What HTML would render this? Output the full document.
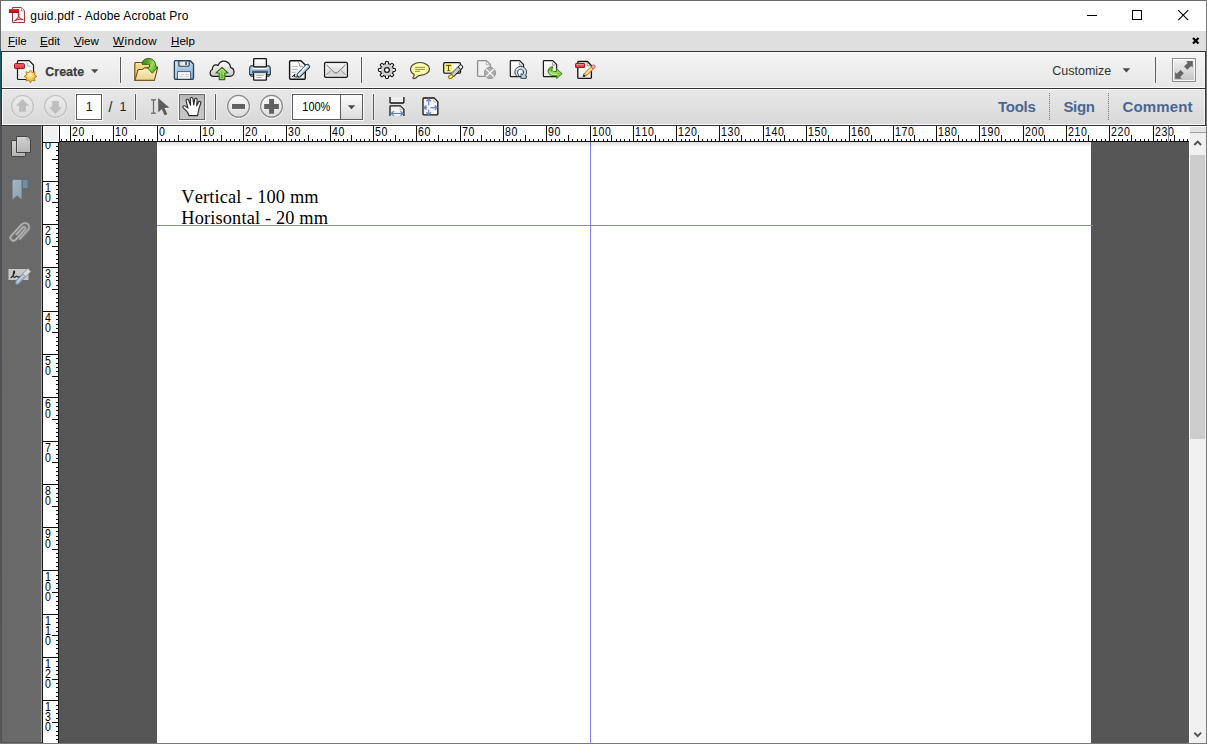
<!DOCTYPE html>
<html><head><meta charset="utf-8"><title>guid.pdf - Adobe Acrobat Pro</title>
<style>
*{box-sizing:border-box;margin:0;padding:0}
html,body{width:1207px;height:744px;overflow:hidden;background:#fff}
body{font-family:"Liberation Sans",sans-serif;position:relative;color:#000}
.abs{position:absolute}
#win{position:absolute;left:0;top:0;width:1207px;height:744px;background:#fff;overflow:hidden}
#bl{left:0;top:0;width:1px;height:744px;background:#6b6b6b}
#bl2{left:0;top:49px;width:1px;height:695px;background:linear-gradient(#1f5868 0,#1f5868 45px,#4a4f55 60px,#555a5e 100%)}
#bt{left:0;top:0;width:1207px;height:1px;background:#6b6b6b}
#br{left:1206px;top:0;width:1px;height:744px;background:#7a7a7a}
#bb{left:0;top:743px;width:1207px;height:1px;background:#7a7a7a}
#title{left:30.3px;top:9px;font-size:12px;line-height:15px;white-space:nowrap;color:#000;letter-spacing:0.17px}
#menubar{left:1px;top:31px;width:1205px;height:20px;background:#dfdfdf}
.mi{position:absolute;top:33px;font-size:11.6px;line-height:15px;color:#000;white-space:nowrap}
.mi u{text-decoration:underline;text-underline-offset:1px}
.tb{position:absolute;left:1px;width:1205px;border:1px solid #333;box-shadow:inset 0 0 0 1px #fbfbfb}
#tb1{top:51px;height:38px;background:linear-gradient(#f5f5f5,#e6e6e6)}
#tb2{top:88px;height:38px;background:linear-gradient(#e8e8e8,#d8d8d8)}
.sep{position:absolute;width:1px;background:#585858;box-shadow:0 0 0 1px rgba(255,255,255,0.45)}
#nav{left:1px;top:126px;width:41px;height:617px;background:#696969;border-left:1px solid #505050}
#navr{left:41px;top:126px;width:1px;height:617px;background:#a8a8a8}
#content{left:59px;top:142px;width:1130px;height:601px;background:#565656}
#page{left:157px;top:138px;width:934px;height:700px;background:#fff}
#corner{left:42px;top:126px;width:18px;height:17px;background:#f0f0f0;border-left:1px solid #111;border-right:1px solid #111;border-bottom:1px solid #111;box-shadow:inset 0 0 0 1px #fff}
#hr{left:60px;top:126px;width:1129px;height:15px;background:#fff}
#hrb{left:59px;top:141px;width:1130px;height:1px;background:#111}
#hrt{left:1px;top:125px;width:1205px;height:1px;background:#333}
#vr{left:42px;top:143px;width:17px;height:600px;background:#fff;border-left:1px solid #111;border-right:1px solid #111}
.rul{left:0;top:0;width:1207px;height:744px;font-family:"Liberation Sans",sans-serif;font-size:12px;fill:#000}
#sb{left:1189px;top:126px;width:17px;height:617px;background:#fff}
#sbt{left:1190px;top:133px;width:16px;height:610px;background:#f0f0f0}
#sbs{left:1190px;top:127px;width:16px;height:6px;background:#e3e3e3;border-bottom:1px solid #a0a0a0}
#thumb{left:1190px;top:155px;width:15px;height:284px;background:#cdcdcd}
.guide{position:absolute;background:#8080ff}
#doc{position:absolute;font-family:"Liberation Serif",serif;font-size:18.33px;color:#000;font-kerning:none;letter-spacing:0.15px;white-space:nowrap}
.tab{position:absolute;top:98px;font-size:15px;font-weight:bold;color:#4a6791;line-height:18px;white-space:nowrap}
.dot{position:absolute;top:93px;width:1px;height:27px;background-image:repeating-linear-gradient(#777 0 1px,transparent 1px 2px)}
</style></head><body>
<div id="win">
<!-- title bar -->
<div class="abs" id="title">guid.pdf - Adobe Acrobat Pro</div>
<!-- menubar -->
<div class="abs" id="menubar"></div>
<div class="mi" style="left:8px"><u>F</u>ile</div>
<div class="mi" style="left:40px"><u>E</u>dit</div>
<div class="mi" style="left:74px"><u>V</u>iew</div>
<div class="mi" style="left:113px;letter-spacing:0.5px"><u>W</u>indow</div>
<div class="mi" style="left:171px"><u>H</u>elp</div>
<!-- toolbars -->
<div class="tb" id="tb1"></div>
<div class="tb" id="tb2"></div>
<div class="abs" id="hrt"></div>
<div class="sep" style="left:120px;top:57px;height:26px"></div>
<div class="sep" style="left:361px;top:57px;height:26px"></div>
<div class="sep" style="left:1155px;top:57px;height:26px"></div>
<div class="sep" style="left:135px;top:94px;height:26px"></div>
<div class="sep" style="left:215px;top:94px;height:26px"></div>
<div class="sep" style="left:373px;top:94px;height:26px"></div>
<div class="tab" id="t1" style="left:998px;letter-spacing:-0.25px">Tools</div>
<div class="tab" id="t2" style="left:1063.4px;letter-spacing:-0.3px">Sign</div>
<div class="tab" id="t3" style="left:1122.5px;letter-spacing:0.15px">Comment</div>
<div class="dot" style="left:1049px"></div>
<div class="dot" style="left:1108px"></div>
<!-- nav pane -->
<div class="abs" id="nav"></div><div class="abs" id="navr"></div>
<div class="abs" style="left:1px;top:742px;width:41px;height:1px;background:#555"></div>
<!-- content -->
<div class="abs" id="content"></div>
<div class="abs" id="page"></div>
<div id="doc" style="left:181.3px;top:186.5px;line-height:21.4px">Vertical - 100 mm<br>Horisontal - 20 mm</div>
<div class="guide" style="left:590px;top:142px;width:1px;height:601px"></div>
<div class="guide" style="left:157px;top:225px;width:936px;height:1px"></div>
<div class="abs" style="left:157px;top:142px;width:934px;height:5px;background:linear-gradient(rgba(0,0,0,0.13),rgba(0,0,0,0))"></div>
<!-- rulers -->
<div class="abs" id="vr"></div>
<svg class="abs rul" width="1207" height="744" shape-rendering="crispEdges"><g fill="#111"><rect x="56" y="146" width="2" height="1"/><rect x="56" y="150" width="2" height="1"/><rect x="56" y="155" width="2" height="1"/><rect x="52" y="159" width="6" height="1"/><rect x="56" y="163" width="2" height="1"/><rect x="56" y="168" width="2" height="1"/><rect x="56" y="172" width="2" height="1"/><rect x="56" y="176" width="2" height="1"/><rect x="43" y="181" width="15" height="1"/><rect x="56" y="185" width="2" height="1"/><rect x="56" y="189" width="2" height="1"/><rect x="56" y="194" width="2" height="1"/><rect x="56" y="198" width="2" height="1"/><rect x="52" y="202" width="6" height="1"/><rect x="56" y="207" width="2" height="1"/><rect x="56" y="211" width="2" height="1"/><rect x="56" y="215" width="2" height="1"/><rect x="56" y="220" width="2" height="1"/><rect x="43" y="224" width="15" height="1"/><rect x="56" y="228" width="2" height="1"/><rect x="56" y="233" width="2" height="1"/><rect x="56" y="237" width="2" height="1"/><rect x="56" y="241" width="2" height="1"/><rect x="52" y="246" width="6" height="1"/><rect x="56" y="250" width="2" height="1"/><rect x="56" y="254" width="2" height="1"/><rect x="56" y="259" width="2" height="1"/><rect x="56" y="263" width="2" height="1"/><rect x="43" y="267" width="15" height="1"/><rect x="56" y="272" width="2" height="1"/><rect x="56" y="276" width="2" height="1"/><rect x="56" y="280" width="2" height="1"/><rect x="56" y="285" width="2" height="1"/><rect x="52" y="289" width="6" height="1"/><rect x="56" y="293" width="2" height="1"/><rect x="56" y="298" width="2" height="1"/><rect x="56" y="302" width="2" height="1"/><rect x="56" y="306" width="2" height="1"/><rect x="43" y="311" width="15" height="1"/><rect x="56" y="315" width="2" height="1"/><rect x="56" y="319" width="2" height="1"/><rect x="56" y="324" width="2" height="1"/><rect x="56" y="328" width="2" height="1"/><rect x="52" y="332" width="6" height="1"/><rect x="56" y="337" width="2" height="1"/><rect x="56" y="341" width="2" height="1"/><rect x="56" y="345" width="2" height="1"/><rect x="56" y="350" width="2" height="1"/><rect x="43" y="354" width="15" height="1"/><rect x="56" y="358" width="2" height="1"/><rect x="56" y="363" width="2" height="1"/><rect x="56" y="367" width="2" height="1"/><rect x="56" y="371" width="2" height="1"/><rect x="52" y="376" width="6" height="1"/><rect x="56" y="380" width="2" height="1"/><rect x="56" y="384" width="2" height="1"/><rect x="56" y="389" width="2" height="1"/><rect x="56" y="393" width="2" height="1"/><rect x="43" y="397" width="15" height="1"/><rect x="56" y="402" width="2" height="1"/><rect x="56" y="406" width="2" height="1"/><rect x="56" y="410" width="2" height="1"/><rect x="56" y="415" width="2" height="1"/><rect x="52" y="419" width="6" height="1"/><rect x="56" y="423" width="2" height="1"/><rect x="56" y="428" width="2" height="1"/><rect x="56" y="432" width="2" height="1"/><rect x="56" y="436" width="2" height="1"/><rect x="43" y="441" width="15" height="1"/><rect x="56" y="445" width="2" height="1"/><rect x="56" y="449" width="2" height="1"/><rect x="56" y="454" width="2" height="1"/><rect x="56" y="458" width="2" height="1"/><rect x="52" y="462" width="6" height="1"/><rect x="56" y="467" width="2" height="1"/><rect x="56" y="471" width="2" height="1"/><rect x="56" y="475" width="2" height="1"/><rect x="56" y="480" width="2" height="1"/><rect x="43" y="484" width="15" height="1"/><rect x="56" y="488" width="2" height="1"/><rect x="56" y="493" width="2" height="1"/><rect x="56" y="497" width="2" height="1"/><rect x="56" y="501" width="2" height="1"/><rect x="52" y="506" width="6" height="1"/><rect x="56" y="510" width="2" height="1"/><rect x="56" y="514" width="2" height="1"/><rect x="56" y="519" width="2" height="1"/><rect x="56" y="523" width="2" height="1"/><rect x="43" y="527" width="15" height="1"/><rect x="56" y="531" width="2" height="1"/><rect x="56" y="536" width="2" height="1"/><rect x="56" y="540" width="2" height="1"/><rect x="56" y="544" width="2" height="1"/><rect x="52" y="549" width="6" height="1"/><rect x="56" y="553" width="2" height="1"/><rect x="56" y="557" width="2" height="1"/><rect x="56" y="562" width="2" height="1"/><rect x="56" y="566" width="2" height="1"/><rect x="43" y="570" width="15" height="1"/><rect x="56" y="575" width="2" height="1"/><rect x="56" y="579" width="2" height="1"/><rect x="56" y="583" width="2" height="1"/><rect x="56" y="588" width="2" height="1"/><rect x="52" y="592" width="6" height="1"/><rect x="56" y="596" width="2" height="1"/><rect x="56" y="601" width="2" height="1"/><rect x="56" y="605" width="2" height="1"/><rect x="56" y="609" width="2" height="1"/><rect x="43" y="614" width="15" height="1"/><rect x="56" y="618" width="2" height="1"/><rect x="56" y="622" width="2" height="1"/><rect x="56" y="627" width="2" height="1"/><rect x="56" y="631" width="2" height="1"/><rect x="52" y="635" width="6" height="1"/><rect x="56" y="640" width="2" height="1"/><rect x="56" y="644" width="2" height="1"/><rect x="56" y="648" width="2" height="1"/><rect x="56" y="653" width="2" height="1"/><rect x="43" y="657" width="15" height="1"/><rect x="56" y="661" width="2" height="1"/><rect x="56" y="666" width="2" height="1"/><rect x="56" y="670" width="2" height="1"/><rect x="56" y="674" width="2" height="1"/><rect x="52" y="679" width="6" height="1"/><rect x="56" y="683" width="2" height="1"/><rect x="56" y="687" width="2" height="1"/><rect x="56" y="692" width="2" height="1"/><rect x="56" y="696" width="2" height="1"/><rect x="43" y="700" width="15" height="1"/><rect x="56" y="705" width="2" height="1"/><rect x="56" y="709" width="2" height="1"/><rect x="56" y="713" width="2" height="1"/><rect x="56" y="718" width="2" height="1"/><rect x="52" y="722" width="6" height="1"/><rect x="56" y="726" width="2" height="1"/><rect x="56" y="731" width="2" height="1"/><rect x="56" y="735" width="2" height="1"/><rect x="56" y="739" width="2" height="1"/></g><g shape-rendering="auto"><text transform="translate(45.1 149.0) scale(0.88 1)">0</text><text transform="translate(45.1 191.6) scale(0.88 1)">1</text><text transform="translate(45.1 201.9) scale(0.88 1)">0</text><text transform="translate(45.1 234.6) scale(0.88 1)">2</text><text transform="translate(45.1 244.9) scale(0.88 1)">0</text><text transform="translate(45.1 277.6) scale(0.88 1)">3</text><text transform="translate(45.1 287.9) scale(0.88 1)">0</text><text transform="translate(45.1 321.6) scale(0.88 1)">4</text><text transform="translate(45.1 331.9) scale(0.88 1)">0</text><text transform="translate(45.1 364.6) scale(0.88 1)">5</text><text transform="translate(45.1 374.9) scale(0.88 1)">0</text><text transform="translate(45.1 407.6) scale(0.88 1)">6</text><text transform="translate(45.1 417.9) scale(0.88 1)">0</text><text transform="translate(45.1 451.6) scale(0.88 1)">7</text><text transform="translate(45.1 461.9) scale(0.88 1)">0</text><text transform="translate(45.1 494.6) scale(0.88 1)">8</text><text transform="translate(45.1 504.9) scale(0.88 1)">0</text><text transform="translate(45.1 537.6) scale(0.88 1)">9</text><text transform="translate(45.1 547.9) scale(0.88 1)">0</text><text transform="translate(45.1 580.6) scale(0.88 1)">1</text><text transform="translate(45.1 590.9) scale(0.88 1)">0</text><text transform="translate(45.1 601.2) scale(0.88 1)">0</text><text transform="translate(45.1 624.6) scale(0.88 1)">1</text><text transform="translate(45.1 634.9) scale(0.88 1)">1</text><text transform="translate(45.1 645.2) scale(0.88 1)">0</text><text transform="translate(45.1 667.6) scale(0.88 1)">1</text><text transform="translate(45.1 677.9) scale(0.88 1)">2</text><text transform="translate(45.1 688.2) scale(0.88 1)">0</text><text transform="translate(45.1 710.6) scale(0.88 1)">1</text><text transform="translate(45.1 720.9) scale(0.88 1)">3</text><text transform="translate(45.1 731.2) scale(0.88 1)">0</text></g></svg>
<div class="abs" id="corner"></div>
<div class="abs" id="hr"></div>
<div class="abs" id="hrb"></div>
<svg class="abs rul" width="1207" height="744" shape-rendering="crispEdges"><g fill="#111"><rect x="61" y="139" width="1" height="2"/><rect x="66" y="139" width="1" height="2"/><rect x="70" y="126" width="1" height="15"/><rect x="74" y="139" width="1" height="2"/><rect x="79" y="139" width="1" height="2"/><rect x="83" y="139" width="1" height="2"/><rect x="87" y="139" width="1" height="2"/><rect x="92" y="135" width="1" height="6"/><rect x="96" y="139" width="1" height="2"/><rect x="100" y="139" width="1" height="2"/><rect x="105" y="139" width="1" height="2"/><rect x="109" y="139" width="1" height="2"/><rect x="113" y="126" width="1" height="15"/><rect x="118" y="139" width="1" height="2"/><rect x="122" y="139" width="1" height="2"/><rect x="126" y="139" width="1" height="2"/><rect x="131" y="139" width="1" height="2"/><rect x="135" y="135" width="1" height="6"/><rect x="139" y="139" width="1" height="2"/><rect x="144" y="139" width="1" height="2"/><rect x="148" y="139" width="1" height="2"/><rect x="152" y="139" width="1" height="2"/><rect x="157" y="126" width="1" height="15"/><rect x="161" y="139" width="1" height="2"/><rect x="165" y="139" width="1" height="2"/><rect x="169" y="139" width="1" height="2"/><rect x="174" y="139" width="1" height="2"/><rect x="178" y="135" width="1" height="6"/><rect x="182" y="139" width="1" height="2"/><rect x="187" y="139" width="1" height="2"/><rect x="191" y="139" width="1" height="2"/><rect x="195" y="139" width="1" height="2"/><rect x="200" y="126" width="1" height="15"/><rect x="204" y="139" width="1" height="2"/><rect x="208" y="139" width="1" height="2"/><rect x="213" y="139" width="1" height="2"/><rect x="217" y="139" width="1" height="2"/><rect x="221" y="135" width="1" height="6"/><rect x="226" y="139" width="1" height="2"/><rect x="230" y="139" width="1" height="2"/><rect x="234" y="139" width="1" height="2"/><rect x="239" y="139" width="1" height="2"/><rect x="243" y="126" width="1" height="15"/><rect x="247" y="139" width="1" height="2"/><rect x="252" y="139" width="1" height="2"/><rect x="256" y="139" width="1" height="2"/><rect x="260" y="139" width="1" height="2"/><rect x="265" y="135" width="1" height="6"/><rect x="269" y="139" width="1" height="2"/><rect x="273" y="139" width="1" height="2"/><rect x="278" y="139" width="1" height="2"/><rect x="282" y="139" width="1" height="2"/><rect x="286" y="126" width="1" height="15"/><rect x="291" y="139" width="1" height="2"/><rect x="295" y="139" width="1" height="2"/><rect x="299" y="139" width="1" height="2"/><rect x="304" y="139" width="1" height="2"/><rect x="308" y="135" width="1" height="6"/><rect x="312" y="139" width="1" height="2"/><rect x="317" y="139" width="1" height="2"/><rect x="321" y="139" width="1" height="2"/><rect x="325" y="139" width="1" height="2"/><rect x="330" y="126" width="1" height="15"/><rect x="334" y="139" width="1" height="2"/><rect x="338" y="139" width="1" height="2"/><rect x="343" y="139" width="1" height="2"/><rect x="347" y="139" width="1" height="2"/><rect x="351" y="135" width="1" height="6"/><rect x="356" y="139" width="1" height="2"/><rect x="360" y="139" width="1" height="2"/><rect x="364" y="139" width="1" height="2"/><rect x="369" y="139" width="1" height="2"/><rect x="373" y="126" width="1" height="15"/><rect x="377" y="139" width="1" height="2"/><rect x="382" y="139" width="1" height="2"/><rect x="386" y="139" width="1" height="2"/><rect x="390" y="139" width="1" height="2"/><rect x="395" y="135" width="1" height="6"/><rect x="399" y="139" width="1" height="2"/><rect x="403" y="139" width="1" height="2"/><rect x="408" y="139" width="1" height="2"/><rect x="412" y="139" width="1" height="2"/><rect x="416" y="126" width="1" height="15"/><rect x="421" y="139" width="1" height="2"/><rect x="425" y="139" width="1" height="2"/><rect x="429" y="139" width="1" height="2"/><rect x="434" y="139" width="1" height="2"/><rect x="438" y="135" width="1" height="6"/><rect x="442" y="139" width="1" height="2"/><rect x="447" y="139" width="1" height="2"/><rect x="451" y="139" width="1" height="2"/><rect x="455" y="139" width="1" height="2"/><rect x="460" y="126" width="1" height="15"/><rect x="464" y="139" width="1" height="2"/><rect x="468" y="139" width="1" height="2"/><rect x="473" y="139" width="1" height="2"/><rect x="477" y="139" width="1" height="2"/><rect x="481" y="135" width="1" height="6"/><rect x="486" y="139" width="1" height="2"/><rect x="490" y="139" width="1" height="2"/><rect x="494" y="139" width="1" height="2"/><rect x="499" y="139" width="1" height="2"/><rect x="503" y="126" width="1" height="15"/><rect x="507" y="139" width="1" height="2"/><rect x="512" y="139" width="1" height="2"/><rect x="516" y="139" width="1" height="2"/><rect x="520" y="139" width="1" height="2"/><rect x="525" y="135" width="1" height="6"/><rect x="529" y="139" width="1" height="2"/><rect x="533" y="139" width="1" height="2"/><rect x="538" y="139" width="1" height="2"/><rect x="542" y="139" width="1" height="2"/><rect x="546" y="126" width="1" height="15"/><rect x="551" y="139" width="1" height="2"/><rect x="555" y="139" width="1" height="2"/><rect x="559" y="139" width="1" height="2"/><rect x="564" y="139" width="1" height="2"/><rect x="568" y="135" width="1" height="6"/><rect x="572" y="139" width="1" height="2"/><rect x="577" y="139" width="1" height="2"/><rect x="581" y="139" width="1" height="2"/><rect x="585" y="139" width="1" height="2"/><rect x="590" y="126" width="1" height="15"/><rect x="594" y="139" width="1" height="2"/><rect x="598" y="139" width="1" height="2"/><rect x="603" y="139" width="1" height="2"/><rect x="607" y="139" width="1" height="2"/><rect x="611" y="135" width="1" height="6"/><rect x="616" y="139" width="1" height="2"/><rect x="620" y="139" width="1" height="2"/><rect x="624" y="139" width="1" height="2"/><rect x="629" y="139" width="1" height="2"/><rect x="633" y="126" width="1" height="15"/><rect x="637" y="139" width="1" height="2"/><rect x="642" y="139" width="1" height="2"/><rect x="646" y="139" width="1" height="2"/><rect x="650" y="139" width="1" height="2"/><rect x="655" y="135" width="1" height="6"/><rect x="659" y="139" width="1" height="2"/><rect x="663" y="139" width="1" height="2"/><rect x="668" y="139" width="1" height="2"/><rect x="672" y="139" width="1" height="2"/><rect x="676" y="126" width="1" height="15"/><rect x="681" y="139" width="1" height="2"/><rect x="685" y="139" width="1" height="2"/><rect x="689" y="139" width="1" height="2"/><rect x="694" y="139" width="1" height="2"/><rect x="698" y="135" width="1" height="6"/><rect x="702" y="139" width="1" height="2"/><rect x="707" y="139" width="1" height="2"/><rect x="711" y="139" width="1" height="2"/><rect x="715" y="139" width="1" height="2"/><rect x="719" y="126" width="1" height="15"/><rect x="724" y="139" width="1" height="2"/><rect x="728" y="139" width="1" height="2"/><rect x="732" y="139" width="1" height="2"/><rect x="737" y="139" width="1" height="2"/><rect x="741" y="135" width="1" height="6"/><rect x="745" y="139" width="1" height="2"/><rect x="750" y="139" width="1" height="2"/><rect x="754" y="139" width="1" height="2"/><rect x="758" y="139" width="1" height="2"/><rect x="763" y="126" width="1" height="15"/><rect x="767" y="139" width="1" height="2"/><rect x="771" y="139" width="1" height="2"/><rect x="776" y="139" width="1" height="2"/><rect x="780" y="139" width="1" height="2"/><rect x="784" y="135" width="1" height="6"/><rect x="789" y="139" width="1" height="2"/><rect x="793" y="139" width="1" height="2"/><rect x="797" y="139" width="1" height="2"/><rect x="802" y="139" width="1" height="2"/><rect x="806" y="126" width="1" height="15"/><rect x="810" y="139" width="1" height="2"/><rect x="815" y="139" width="1" height="2"/><rect x="819" y="139" width="1" height="2"/><rect x="823" y="139" width="1" height="2"/><rect x="828" y="135" width="1" height="6"/><rect x="832" y="139" width="1" height="2"/><rect x="836" y="139" width="1" height="2"/><rect x="841" y="139" width="1" height="2"/><rect x="845" y="139" width="1" height="2"/><rect x="849" y="126" width="1" height="15"/><rect x="854" y="139" width="1" height="2"/><rect x="858" y="139" width="1" height="2"/><rect x="862" y="139" width="1" height="2"/><rect x="867" y="139" width="1" height="2"/><rect x="871" y="135" width="1" height="6"/><rect x="875" y="139" width="1" height="2"/><rect x="880" y="139" width="1" height="2"/><rect x="884" y="139" width="1" height="2"/><rect x="888" y="139" width="1" height="2"/><rect x="893" y="126" width="1" height="15"/><rect x="897" y="139" width="1" height="2"/><rect x="901" y="139" width="1" height="2"/><rect x="906" y="139" width="1" height="2"/><rect x="910" y="139" width="1" height="2"/><rect x="914" y="135" width="1" height="6"/><rect x="919" y="139" width="1" height="2"/><rect x="923" y="139" width="1" height="2"/><rect x="927" y="139" width="1" height="2"/><rect x="932" y="139" width="1" height="2"/><rect x="936" y="126" width="1" height="15"/><rect x="940" y="139" width="1" height="2"/><rect x="945" y="139" width="1" height="2"/><rect x="949" y="139" width="1" height="2"/><rect x="953" y="139" width="1" height="2"/><rect x="958" y="135" width="1" height="6"/><rect x="962" y="139" width="1" height="2"/><rect x="966" y="139" width="1" height="2"/><rect x="971" y="139" width="1" height="2"/><rect x="975" y="139" width="1" height="2"/><rect x="979" y="126" width="1" height="15"/><rect x="984" y="139" width="1" height="2"/><rect x="988" y="139" width="1" height="2"/><rect x="992" y="139" width="1" height="2"/><rect x="997" y="139" width="1" height="2"/><rect x="1001" y="135" width="1" height="6"/><rect x="1005" y="139" width="1" height="2"/><rect x="1010" y="139" width="1" height="2"/><rect x="1014" y="139" width="1" height="2"/><rect x="1018" y="139" width="1" height="2"/><rect x="1023" y="126" width="1" height="15"/><rect x="1027" y="139" width="1" height="2"/><rect x="1031" y="139" width="1" height="2"/><rect x="1036" y="139" width="1" height="2"/><rect x="1040" y="139" width="1" height="2"/><rect x="1044" y="135" width="1" height="6"/><rect x="1049" y="139" width="1" height="2"/><rect x="1053" y="139" width="1" height="2"/><rect x="1057" y="139" width="1" height="2"/><rect x="1062" y="139" width="1" height="2"/><rect x="1066" y="126" width="1" height="15"/><rect x="1070" y="139" width="1" height="2"/><rect x="1075" y="139" width="1" height="2"/><rect x="1079" y="139" width="1" height="2"/><rect x="1083" y="139" width="1" height="2"/><rect x="1088" y="135" width="1" height="6"/><rect x="1092" y="139" width="1" height="2"/><rect x="1096" y="139" width="1" height="2"/><rect x="1101" y="139" width="1" height="2"/><rect x="1105" y="139" width="1" height="2"/><rect x="1109" y="126" width="1" height="15"/><rect x="1114" y="139" width="1" height="2"/><rect x="1118" y="139" width="1" height="2"/><rect x="1122" y="139" width="1" height="2"/><rect x="1127" y="139" width="1" height="2"/><rect x="1131" y="135" width="1" height="6"/><rect x="1135" y="139" width="1" height="2"/><rect x="1140" y="139" width="1" height="2"/><rect x="1144" y="139" width="1" height="2"/><rect x="1148" y="139" width="1" height="2"/><rect x="1153" y="126" width="1" height="15"/><rect x="1157" y="139" width="1" height="2"/><rect x="1161" y="139" width="1" height="2"/><rect x="1166" y="139" width="1" height="2"/><rect x="1170" y="139" width="1" height="2"/><rect x="1174" y="135" width="1" height="6"/><rect x="1179" y="139" width="1" height="2"/><rect x="1183" y="139" width="1" height="2"/><rect x="1187" y="139" width="1" height="2"/></g><g shape-rendering="auto"><text transform="translate(72 135.9) scale(0.88 1)" x="0.00 7.35">20</text><text transform="translate(115 135.9) scale(0.88 1)" x="0.00 7.35">10</text><text transform="translate(159 135.9) scale(0.88 1)" x="0.00">0</text><text transform="translate(202 135.9) scale(0.88 1)" x="0.00 7.35">10</text><text transform="translate(245 135.9) scale(0.88 1)" x="0.00 7.35">20</text><text transform="translate(288 135.9) scale(0.88 1)" x="0.00 7.35">30</text><text transform="translate(332 135.9) scale(0.88 1)" x="0.00 7.35">40</text><text transform="translate(375 135.9) scale(0.88 1)" x="0.00 7.35">50</text><text transform="translate(418 135.9) scale(0.88 1)" x="0.00 7.35">60</text><text transform="translate(462 135.9) scale(0.88 1)" x="0.00 7.35">70</text><text transform="translate(505 135.9) scale(0.88 1)" x="0.00 7.35">80</text><text transform="translate(548 135.9) scale(0.88 1)" x="0.00 7.35">90</text><text transform="translate(592 135.9) scale(0.88 1)" x="0.00 7.35 14.70">100</text><text transform="translate(635 135.9) scale(0.88 1)" x="0.00 7.35 14.70">110</text><text transform="translate(678 135.9) scale(0.88 1)" x="0.00 7.35 14.70">120</text><text transform="translate(721 135.9) scale(0.88 1)" x="0.00 7.35 14.70">130</text><text transform="translate(765 135.9) scale(0.88 1)" x="0.00 7.35 14.70">140</text><text transform="translate(808 135.9) scale(0.88 1)" x="0.00 7.35 14.70">150</text><text transform="translate(851 135.9) scale(0.88 1)" x="0.00 7.35 14.70">160</text><text transform="translate(895 135.9) scale(0.88 1)" x="0.00 7.35 14.70">170</text><text transform="translate(938 135.9) scale(0.88 1)" x="0.00 7.35 14.70">180</text><text transform="translate(981 135.9) scale(0.88 1)" x="0.00 7.35 14.70">190</text><text transform="translate(1025 135.9) scale(0.88 1)" x="0.00 7.35 14.70">200</text><text transform="translate(1068 135.9) scale(0.88 1)" x="0.00 7.35 14.70">210</text><text transform="translate(1111 135.9) scale(0.88 1)" x="0.00 7.35 14.70">220</text><text transform="translate(1155 135.9) scale(0.88 1)" x="0.00 7.35 14.70">230</text></g></svg>
<div class="abs" style="left:1168px;top:126px;width:1px;height:16px;background:#8a8a8a"></div>
<!-- scrollbar -->
<div class="abs" id="sb"></div><div class="abs" id="sbt"></div><div class="abs" id="sbs"></div><div class="abs" id="thumb"></div>
<svg class="abs" id="icons" width="1207" height="744" viewBox="0 0 1207 744" style="left:0;top:0;font-family:'Liberation Sans',sans-serif">
<defs>
<linearGradient id="gRed" x1="0" y1="0" x2="0" y2="1"><stop offset="0" stop-color="#f46a72"/><stop offset="1" stop-color="#e2323e"/></linearGradient>
<radialGradient id="gStar" cx="0.45" cy="0.35" r="0.7"><stop offset="0" stop-color="#fff6c8"/><stop offset="0.45" stop-color="#f3cf5c"/><stop offset="1" stop-color="#dca52a"/></radialGradient>
<linearGradient id="gDoc" x1="0" y1="0" x2="0" y2="1"><stop offset="0" stop-color="#ffffff"/><stop offset="1" stop-color="#e9e9e9"/></linearGradient>
<linearGradient id="gFold" x1="0" y1="0" x2="0" y2="1"><stop offset="0" stop-color="#f3dc8c"/><stop offset="1" stop-color="#e6c76e"/></linearGradient>
<linearGradient id="gFoldF" x1="0" y1="0" x2="0" y2="1"><stop offset="0" stop-color="#fbf0c4"/><stop offset="1" stop-color="#ead38a"/></linearGradient>
<linearGradient id="gGreen" x1="0" y1="0" x2="0" y2="1"><stop offset="0" stop-color="#b6e67c"/><stop offset="1" stop-color="#4fa51e"/></linearGradient>
<linearGradient id="gGreenD" x1="0" y1="0" x2="1" y2="1"><stop offset="0" stop-color="#3f8a12"/><stop offset="0.5" stop-color="#8fd255"/><stop offset="1" stop-color="#55ad22"/></linearGradient>
<linearGradient id="gFlop" x1="0" y1="0" x2="0" y2="1"><stop offset="0" stop-color="#c3dcf0"/><stop offset="1" stop-color="#7eaad8"/></linearGradient>
<linearGradient id="gMetal" x1="0" y1="0" x2="1" y2="0"><stop offset="0" stop-color="#c9c9c9"/><stop offset="0.5" stop-color="#f6f6f6"/><stop offset="1" stop-color="#d6d6d6"/></linearGradient>
<linearGradient id="gCloud" x1="0" y1="0" x2="0" y2="1"><stop offset="0" stop-color="#ffffff"/><stop offset="1" stop-color="#c9c9c9"/></linearGradient>
<linearGradient id="gPrn" x1="0" y1="0" x2="0" y2="1"><stop offset="0" stop-color="#c4def3"/><stop offset="0.5" stop-color="#a0c6ea"/><stop offset="1" stop-color="#9ec2e6"/></linearGradient>
<linearGradient id="gEnv" x1="0" y1="0" x2="0" y2="1"><stop offset="0" stop-color="#f8f8f8"/><stop offset="1" stop-color="#cfcfcf"/></linearGradient>
<linearGradient id="gBtn" x1="0" y1="0" x2="0" y2="1"><stop offset="0" stop-color="#fbfbfb"/><stop offset="1" stop-color="#dcdcdc"/></linearGradient>
<linearGradient id="gBtnD" x1="0" y1="0" x2="0" y2="1"><stop offset="0" stop-color="#ececec"/><stop offset="1" stop-color="#dcdcdc"/></linearGradient>
<linearGradient id="gSel" x1="0" y1="0" x2="0" y2="1"><stop offset="0" stop-color="#b4b4b4"/><stop offset="0.3" stop-color="#c4c4c4"/><stop offset="1" stop-color="#c6c6c6"/></linearGradient>
<linearGradient id="gFs" x1="0" y1="0" x2="0" y2="1"><stop offset="0" stop-color="#f4f4f4"/><stop offset="1" stop-color="#c4c4c4"/></linearGradient>
<linearGradient id="gPg" x1="0" y1="0" x2="0" y2="1"><stop offset="0" stop-color="#d2d2d2"/><stop offset="1" stop-color="#b4b4b4"/></linearGradient>
<linearGradient id="gBm" x1="0" y1="0" x2="1" y2="1"><stop offset="0" stop-color="#a6b6c2"/><stop offset="1" stop-color="#8c9fb0"/></linearGradient>
<linearGradient id="gBlueArr" x1="0" y1="0" x2="0" y2="1"><stop offset="0" stop-color="#dcebf8"/><stop offset="1" stop-color="#a9cbe8"/></linearGradient>
<linearGradient id="gPencil" x1="0" y1="0" x2="1" y2="1"><stop offset="0" stop-color="#f7d67a"/><stop offset="1" stop-color="#e0a030"/></linearGradient>
<linearGradient id="gArrowF" x1="0" y1="0" x2="1" y2="0.6"><stop offset="0" stop-color="#3a7d10"/><stop offset="0.35" stop-color="#5ea826"/><stop offset="0.65" stop-color="#98e05a"/><stop offset="1" stop-color="#4fae1e"/></linearGradient>
<linearGradient id="gGreenE" x1="0" y1="0" x2="1" y2="1"><stop offset="0" stop-color="#4c9a1a"/><stop offset="0.45" stop-color="#9cdc62"/><stop offset="1" stop-color="#62b82a"/></linearGradient>
</defs>
<!-- title bar pdf icon -->
<g>
<path d="M12.5 7.5h9l3 3v12h-12z" fill="#fbf7f7" stroke="#a03a42" stroke-width="1"/>
<path d="M21.5 7.5v3.5h3" fill="#fff" stroke="#8a8a8a" stroke-width="0.8"/>
<rect x="9" y="9" width="10" height="4" fill="#c8161f"/>
<rect x="9" y="9" width="10" height="1" fill="#e0303a"/>
<rect x="9" y="12" width="10" height="1" fill="#9c0d15"/>
<path d="M14.600 20.700c1.700 -0.700 3.200 -2.500 3.900 -4.600c0.500 -1.500 0.500 -2.600 0 -3c-0.500 0.500 -0.300 1.900 0.400 3.300c0.900 1.700 2.500 3 4.300 3.300c-1.500 -0.700 -3.800 -0.600 -5.700 0c-1.200 0.400 -2.300 0.900 -2.900 1z" fill="#f3b4b8" stroke="#c4131c" stroke-width="1" stroke-linejoin="round"/>
</g>
<!-- window controls -->
<g fill="none" stroke="#000" stroke-width="1" shape-rendering="crispEdges">
<path d="M1087 15.5h10"/>
<rect x="1132.5" y="10.5" width="9" height="9"/>
</g>
<path d="M1178.2 10.2l10 10M1188.2 10.2l-10 10" stroke="#000" stroke-width="1.05" fill="none"/>
<path d="M1193 38l5.5 5.5M1198.5 38l-5.5 5.5" stroke="#000" stroke-width="2.2" fill="none"/>
<!-- create icon -->
<g>
<path d="M18.5 60.7h10.6l4.4 4.4v13.4a1 1 0 0 1 -1 1h-14a1 1 0 0 1 -1 -1v-16.8a1 1 0 0 1 1 -1z" fill="url(#gDoc)" stroke="#1c1c1c" stroke-width="1.2"/>
<path d="M26.5 62.5c1.5 0.6 1.3 2 1.2 3.4c1.5-0.1 3 0 3.8 1.3" fill="none" stroke="#a0a0a0" stroke-width="0.9"/>
<rect x="14.6" y="63.6" width="9.8" height="5" rx="0.8" fill="url(#gRed)" stroke="#9b0c12" stroke-width="1"/>
<path d="M30.5 70.0l1.55 2.66l2.98 -0.79l-0.79 2.98l2.66 1.55l-2.66 1.55l0.79 2.98l-2.98 -0.79l-1.55 2.66l-1.55 -2.66l-2.98 0.79l0.79 -2.98l-2.66 -1.55l2.66 -1.55l-0.79 -2.98l2.98 0.79z" fill="url(#gStar)" stroke="#b87a1e" stroke-width="0.9" stroke-linejoin="round"/>
</g>
<text x="45.300" y="75.600" font-size="13.600" font-weight="bold" fill="#3e3e3e" stroke="#3e3e3e" stroke-width="0.250" textLength="38.800" lengthAdjust="spacingAndGlyphs">Create</text>
<path d="M91 69.3h7.4l-3.7 4z" fill="#4a4a4a"/>
<!-- open folder -->
<g>
<path d="M134.800 63.400a0.800 0.800 0 0 1 0.800 -0.800h6.600l1.200 1.600h10.200a0.800 0.800 0 0 1 0.800 0.800v15.200h-19.600z" fill="url(#gFold)" stroke="#6e4c14" stroke-width="1.100"/>
<path d="M135.800 63.700h6" stroke="#fff8dc" stroke-width="0.900"/>
<path d="M134.900 80.300l3 -10.200a0.900 0.900 0 0 1 0.900 -0.600h3.800l2 -1.600h12.200a0.600 0.600 0 0 1 0.600 0.800l-2.800 11a0.900 0.900 0 0 1 -0.900 0.600z" fill="url(#gFoldF)" stroke="#6e4c14" stroke-width="1.100" stroke-linejoin="round"/>
<path d="M139.200 70.600h3.700l1.600 -1.500" fill="none" stroke="#fffdf0" stroke-width="0.900"/>
<path d="M142.100 63.600C142.100 60 144.800 57.800 148.500 57.800C153 57.800 155.800 61 155.800 66.200L157.900 66.400L152.400 72.600L147.100 66.900L149.600 66.500C149.600 63.600 148.900 61.900 147.600 61.700C146.900 61.700 146.900 62.600 146.900 63.600Z" fill="url(#gArrowF)" stroke="#2a6509" stroke-width="0.950" stroke-linejoin="round" transform="translate(0 0.600)"/>
</g>
<!-- floppy save -->
<g>
<path d="M175.400 60.700h14.800l3.300 3.300v14.300a1 1 0 0 1 -1 1h-17.100a1 1 0 0 1 -1 -1v-16.600a1 1 0 0 1 1 -1z" fill="url(#gFlop)"/>
<rect x="175.300" y="61.400" width="1.200" height="17" fill="#dcecf8" opacity="0.800"/>
<rect x="178" y="72" width="12" height="7" fill="#fbfbfb"/>
<path d="M177.500 79v-7.400h13v7.400" fill="none" stroke="#4d6680" stroke-width="1"/>
<path d="M179.500 74.500h1M181.300 74.500h2.600M185.200 74.500h3.600M179.500 76.600h3.600M184.200 76.600h0.800M185.800 76.600h3" stroke="#c0c0c0" stroke-width="0.900"/>
<path d="M175.400 60.700h14.800l3.300 3.300v14.300a1 1 0 0 1 -1 1h-17.100a1 1 0 0 1 -1 -1v-16.600a1 1 0 0 1 1 -1z" fill="none" stroke="#2b3d50" stroke-width="1.300"/>
<path d="M178.800 60.900h10.400v4.300a1 1 0 0 1 -1 1h-8.400a1 1 0 0 1 -1 -1z" fill="url(#gMetal)" stroke="#2e4054" stroke-width="1.100"/>
<rect x="185.200" y="61.700" width="1.700" height="3.300" fill="#3f5a74"/>
</g>
<!-- cloud upload -->
<g>
<path d="M213.500 76.300C211.300 76.300 210.100 74.700 210.100 73C210.100 71 211.300 69.800 212.400 69.300C212.200 66.800 214 64.900 216 64.900C216.800 64.900 217.500 65.100 218.100 65.500C219 62.900 221.300 61.200 224 61.200C227.600 61.200 230.400 64 230.500 67.600C232.600 68 234 69.700 234 71.900C234 74.400 232.200 76.300 229.800 76.300Z" fill="url(#gCloud)" stroke="#1a1a1a" stroke-width="1.200" stroke-linejoin="round"/>
<path d="M222 67.300L228 73H224.800V79.600H219.200V73H216Z" fill="url(#gGreen)" stroke="#2e6b0f" stroke-width="1.100" stroke-linejoin="round"/>
<path d="M222 68.800L225.600 72.200H223.800V78.600H220.200V72.200H218.400Z" fill="none" stroke="#c6f09c" stroke-width="0.700" opacity="0.800"/>
</g>
<!-- printer -->
<g>
<rect x="250.500" y="73" width="18.900" height="3.300" rx="1.200" fill="#dcdcdc" stroke="#141414" stroke-width="1.100"/>
<path d="M249.600 74.600v-6a3 3 0 0 1 3 -3h14.700a3 3 0 0 1 3 3v6z" fill="url(#gPrn)" stroke="#33465a" stroke-width="1.200" stroke-linejoin="round"/>
<rect x="252" y="71" width="16" height="2.200" fill="#34465a" opacity="0.850"/>
<rect x="252" y="70.300" width="16" height="0.800" fill="#5f7a96" opacity="0.600"/>
<rect x="253.650" y="58.600" width="12.750" height="8.400" rx="0.800" fill="url(#gDoc)" stroke="#141414" stroke-width="1.300"/>
<rect x="253" y="67.800" width="14" height="1.300" fill="#ffffff"/>
<path d="M253.650 73v6.400a0.800 0.800 0 0 0 0.800 0.800h11.150a0.800 0.800 0 0 0 0.800 -0.800v-6.400z" fill="#fcfcfc"/>
<path d="M253.650 73v6.400a0.800 0.800 0 0 0 0.800 0.800h11.150a0.800 0.800 0 0 0 0.800 -0.800v-6.400" fill="none" stroke="#141414" stroke-width="1.300"/>
<rect x="254.400" y="73" width="11.300" height="1.600" fill="#d9d9d9"/>
<path d="M256.200 75.500h7.600M256.200 77.500h5.600" stroke="#a8a8a8" stroke-width="0.900"/>
</g>
<!-- edit / sign doc -->
<g>
<path d="M290.600 60.700h10.300l4.400 4.400v13.100a1 1 0 0 1 -1 1h-13.700a1 1 0 0 1 -1 -1v-16.500a1 1 0 0 1 1 -1z" fill="url(#gDoc)" stroke="#141414" stroke-width="1.400"/>
<path d="M298.100 62.400c1.500 0.600 1.600 2.200 1.500 3.800c1.400 -0.100 2.600 0 3.400 0.700" fill="none" stroke="#8c8c8c" stroke-width="0.900"/>
<path d="M291.900 66.400h5.800M291.900 69.400h5.800M291.900 72.400h3.800" stroke="#b4b8bc" stroke-width="1"/>
<path d="M292.100 76.800l2.900 -2.500l-0.900 2.300c1.800 0.500 4 0.400 6 -0.200" fill="none" stroke="#141414" stroke-width="1"/>
<g transform="translate(297.700 76.400) rotate(-45)">
<rect x="0.200" y="-2" width="15.600" height="4" rx="1.500" fill="#b5d6f0" stroke="#1c2c3c" stroke-width="0.950"/>
<path d="M1.800 -0.600h5" stroke="#eaf4fc" stroke-width="1.300" stroke-linecap="round"/>
<path d="M8 -1h5.400" stroke="#ffffff" stroke-width="1.800" stroke-linecap="round"/>
</g>
</g>
<!-- envelope -->
<g>
<rect x="324.650" y="62.550" width="22.700" height="14.750" rx="1.100" fill="url(#gEnv)" stroke="#161616" stroke-width="1.400"/>
<rect x="325.850" y="63.750" width="20.300" height="12.350" fill="none" stroke="#fdfdfd" stroke-width="0.900" opacity="0.900"/>
<path d="M326.300 64.600Q331 69.500 334.200 72.400Q335.900 73.800 337.600 72.400Q340.800 69.500 345.700 64.600" fill="none" stroke="#6a6a6a" stroke-width="0.950"/>
<path d="M326.300 74.900L330.900 70.700M345.700 74.900L341.100 70.700" fill="none" stroke="#808080" stroke-width="0.850"/>
</g>
<!-- gear -->
<g transform="translate(386.950 70)">
<circle r="6.500" fill="#c8c8c8" stroke="#161616" stroke-width="1.200"/>
<rect x="-1.500" y="-8.500" width="3" height="17" rx="0.900" transform="rotate(0)" fill="#fafafa" stroke="#161616" stroke-width="1.150"/><rect x="-1.500" y="-8.500" width="3" height="17" rx="0.900" transform="rotate(45)" fill="#fafafa" stroke="#161616" stroke-width="1.150"/><rect x="-1.500" y="-8.500" width="3" height="17" rx="0.900" transform="rotate(90)" fill="#fafafa" stroke="#161616" stroke-width="1.150"/><rect x="-1.500" y="-8.500" width="3" height="17" rx="0.900" transform="rotate(135)" fill="#fafafa" stroke="#161616" stroke-width="1.150"/>
<circle r="5.950" fill="#c8c8c8"/>
<circle r="4.300" fill="none" stroke="#d6d6d6" stroke-width="1"/>
<circle r="2.400" fill="#fdfdfd" stroke="#161616" stroke-width="1.200"/>
</g>
<!-- comment bubble -->
<g>
<path d="M420 62.500c5.300 0 9.500 2.900 9.500 6.400c0 3.500 -4.100 6.300 -9.300 6.400c-0.900 0 -1.700 0.300 -2.300 0.900c-1 1.200 -2.300 2.300 -4 2.400c-0.900 0 -1.300 -0.900 -0.700 -1.500c0.700 -0.800 1.200 -1.700 1 -2.700c-2.300 -1.200 -3.700 -3.200 -3.700 -5.500c0 -3.500 4.200 -6.400 9.500 -6.400z" fill="#fbfba2" stroke="#4a4040" stroke-width="1.200" stroke-linejoin="round"/>
<path d="M415.100 67.400h9.800M415.100 69.400h9.800M415.100 71.400h4.900" stroke="#8a8550" stroke-width="0.900"/>
</g>
<!-- highlight text -->
<g>
<rect x="443.700" y="62.700" width="16.800" height="10.500" rx="1.200" fill="#fff" stroke="#141414" stroke-width="1.300"/>
<rect x="444.800" y="64" width="7.300" height="8.200" fill="#ffff4a"/>
<path d="M446.300 66.200v-0.900h4.500v0.900M448.550 65.300v5.300M447.400 70.600h2.300" fill="none" stroke="#4a3a10" stroke-width="0.950"/>
<g transform="translate(450.600 76.900) rotate(-44.500)">
<rect x="1.800" y="-1.900" width="14.200" height="3.800" rx="1.300" fill="#b8b8b8" stroke="#1c1c1c" stroke-width="1"/>
<path d="M3.40 -1.6v3.2M4.65 -1.6v3.2M5.90 -1.6v3.2M7.15 -1.6v3.2M8.40 -1.6v3.2M9.65 -1.6v3.2M10.90 -1.6v3.2M12.15 -1.6v3.2" stroke="#ececec" stroke-width="0.550"/>
<path d="M2.600 -1.900H11.500" stroke="#9a9a9a" stroke-width="1"/><path d="M12.400 -1.900v3.800" stroke="#1c1c1c" stroke-width="0.900"/>
<rect x="13" y="-1.200" width="2.400" height="2.400" rx="0.800" fill="#f4f4f4"/>
</g>
<ellipse cx="450.800" cy="76.800" rx="2.300" ry="1.650" transform="rotate(-28 450.600 76.900)" fill="#fbf9d8" stroke="#9a8c00" stroke-width="1.300"/>
</g>
<!-- delete page disabled -->
<g>
<path d="M478.400 60.600h8l3.900 3.900v11a0.800 0.800 0 0 1 -0.800 0.800h-11.100a0.800 0.800 0 0 1 -0.800 -0.800v-14.100a0.800 0.800 0 0 1 0.800 -0.800z" fill="#f1f1f1" stroke="#8e8e8e" stroke-width="1.300"/>
<path d="M486.300 61.400v3.400h3.400" fill="#fafafa" stroke="#a8a8a8" stroke-width="0.900"/>
<circle cx="489.950" cy="72.950" r="5.600" fill="#ababab" stroke="#8c8c8c" stroke-width="0.900"/>
<path d="M486 69l7.900 7.900M493.900 69l-7.900 7.900" stroke="#fafafa" stroke-width="1.300"/>
</g>
<!-- rotate doc -->
<g>
<path d="M511.400 60.700h8.200l3.900 3.900v11.500a0.600 0.600 0 0 1 -0.600 0.600h-12a0.600 0.600 0 0 1 -0.600 -0.600v-14.800a0.600 0.600 0 0 1 0.600 -0.600z" fill="url(#gDoc)" stroke="#1c1c1c" stroke-width="1.200"/>
<path d="M519.300 62.300v2.800h2.800" fill="none" stroke="#8c8c8c" stroke-width="0.900"/>
<path d="M518.300 76.800c-2 -1.200 -3.100 -3.200 -2.800 -5.400c0.400 -2.900 2.900 -5 5.900 -5c3.200 0 5.800 2.500 5.800 5.600c0 1.500 -0.600 2.700 -1.500 3.700l1.400 0.100l-0.300 2.600h-5.300l0.200 -4.700l1.500 0.900c0.600 -0.700 0.900 -1.500 0.900 -2.400c0 -1.700 -1.300 -3 -2.900 -3c-1.700 0 -3 1.300 -3.100 2.900c-0.100 1.200 0.500 2.200 1.500 2.900z" fill="url(#gBlueArr)" stroke="#2a3a4c" stroke-width="0.900" stroke-linejoin="round" transform="translate(-0.600 0)"/>
</g>
<!-- export doc -->
<g>
<path d="M544.500 60.700h8.200l3.900 3.900v11.500a0.600 0.600 0 0 1 -0.600 0.600h-12a0.600 0.600 0 0 1 -0.600 -0.600v-14.800a0.600 0.600 0 0 1 0.600 -0.600z" fill="url(#gDoc)" stroke="#1c1c1c" stroke-width="1.200"/>
<path d="M552.400 62.300v2.800h2.800" fill="none" stroke="#8c8c8c" stroke-width="0.900"/>
<path d="M552.400 66.600c-2.900 0.700 -4.600 2.700 -4.400 5c0.300 2.600 2.900 4.100 6.200 4.100l2.400 0l0 2.900l5.500 -4.900l-5.500 -5.100l0 2.900l-2.300 0c-1.400 0 -2.300 -0.600 -2.400 -1.600c0 -0.900 0.300 -1.400 0.900 -1.800z" fill="url(#gGreenE)" stroke="#2f7a0c" stroke-width="0.900" stroke-linejoin="round"/>
<path d="M549.400 71.400c0.300 2 2.200 3 4.800 3l3.200 0" fill="none" stroke="#e4f8cc" stroke-width="0.900" opacity="0.900"/>
</g>
<!-- edit pdf -->
<g>
<path d="M578.600 61.500h8.800l4 4v12a0.800 0.800 0 0 1 -0.800 0.800h-12a0.800 0.800 0 0 1 -0.800 -0.800v-15.200a0.800 0.800 0 0 1 0.800 -0.800z" fill="url(#gDoc)" stroke="#141414" stroke-width="1.300"/>
<path d="M587.400 62.600v3.200h3" fill="none" stroke="#8c8c8c" stroke-width="0.900"/>
<rect x="575.600" y="63.500" width="9" height="4" rx="0.400" fill="url(#gRed)" stroke="#c00614" stroke-width="1"/>
<path d="M576.500 64.500h7.200" stroke="#f9a0a6" stroke-width="0.700"/>
<g transform="translate(583.300 76.500) rotate(-44)">
<path d="M0 0l3.200 -1.650h9.300v3.300h-9.300z" fill="#f2d162" stroke="#a86a14" stroke-width="0.800" stroke-linejoin="round"/>
<path d="M3.400 -0.500h9" stroke="#f9e9a4" stroke-width="0.900"/>
<path d="M0 0l3.200 -1.650v3.300z" fill="#fbf1d8" stroke="#a86a14" stroke-width="0.600" stroke-linejoin="round"/>
<path d="M0 0l1.700 -0.900v1.800z" fill="#111" stroke="#111" stroke-width="0.700" stroke-linejoin="round"/>
<path d="M12.500 -1.650h1.800a1.650 1.650 0 0 1 0 3.300h-1.800z" fill="#f4a8b0" stroke="#c0505a" stroke-width="0.800"/>
</g>
</g>
<!-- page up / down (disabled) -->
<g>
<circle cx="22.500" cy="107.100" r="11.200" fill="none" stroke="#ececec" stroke-width="1.100"/>
<circle cx="22.500" cy="106.400" r="10.900" fill="url(#gBtnD)" stroke="#c0c0c0" stroke-width="1.200"/>
<path d="M22.500 99.100l6.500 6.600h-3.100v6.100h-6.800v-6.100h-3.100z" fill="#bdbdbd"/>
<circle cx="55.500" cy="107.100" r="11.200" fill="none" stroke="#ececec" stroke-width="1.100"/>
<circle cx="55.500" cy="106.400" r="10.900" fill="url(#gBtnD)" stroke="#c0c0c0" stroke-width="1.200"/>
<path d="M55.500 113.900l6.500 -6.600h-3.200v-6.300h-6.600v6.300h-3.200z" fill="#bdbdbd"/>
</g>
<!-- page number box -->
<rect x="75.500" y="93.500" width="27" height="27" fill="none" stroke="#fcfcfc" stroke-width="1"/>
<rect x="76.500" y="94.500" width="25" height="25" fill="#fff" stroke="#5a5a5a" stroke-width="1"/>
<text x="85.700" y="111.400" font-size="12.500" fill="#222">1</text>
<text x="108.600" y="111.700" font-size="14" fill="#222">/</text>
<text x="119.600" y="111.400" font-size="12.500" fill="#222">1</text>
<!-- I-beam + arrow -->
<g>
<path d="M151 99.600c1.400 0 2.200 0.200 2.500 0.800c0.300 -0.600 1.100 -0.800 2.500 -0.800M151 113.400c1.400 0 2.200 -0.200 2.500 -0.800c0.300 0.600 1.100 0.800 2.500 0.800M153.500 100.200v12.600" fill="none" stroke="#6c6c6c" stroke-width="1.250"/>
<path d="M158.200 98.900v14.700l3.600 -3.400l2.800 6.300l2.700 -1.200l-2.800 -6.200l4.900 -0.400z" fill="#f4f4f4" opacity="0.700"/>
<path d="M158.200 97.900v14.700l3.600 -3.400l2.800 6.300l2.700 -1.200l-2.800 -6.200l4.900 -0.400z" fill="#5c5c5c"/>
</g>
<!-- hand selected -->
<rect x="178.500" y="93.500" width="27" height="27" fill="none" stroke="#fcfcfc" stroke-width="1"/>
<rect x="179.500" y="94.500" width="25" height="25" fill="url(#gSel)" stroke="#686868" stroke-width="1"/>
<g transform="translate(182 0) scale(1.060 1) translate(-182 1.100)"><path d="M186 109.600c-0.800 -0.900 -2.400 -2.200 -3 -3.200c-0.700 -1.300 0.800 -2.400 2.100 -1.400l2.500 2.100l-1.700 -7.300c-0.400 -1.700 1.800 -2.300 2.400 -0.700l1.800 5l-0.300 -6.400c-0.100 -1.700 2.300 -1.900 2.500 -0.200l0.800 6.300l0.800 -5.500c0.300 -1.600 2.500 -1.300 2.400 0.300l-0.500 6l1.700 -3.500c0.800 -1.500 2.700 -0.700 2.200 0.800c-0.900 3.200 -1.600 5.300 -2.200 8c-0.300 1.400 -0.600 3.200 -0.800 4.600h-8.200c-0.300 -1.800 -1.300 -3.500 -2.500 -4.900z" fill="#fdfdfd" stroke="#2a2a2a" stroke-width="1.050" stroke-linejoin="round"/></g>
<!-- zoom out / in -->
<g>
<circle cx="238.500" cy="107.100" r="11.200" fill="none" stroke="#f6f6f6" stroke-width="1.200"/>
<circle cx="238.500" cy="106.300" r="10.900" fill="url(#gBtn)" stroke="#888" stroke-width="1.200"/>
<rect x="232" y="104" width="13" height="4.900" fill="#606060"/>
<circle cx="271.500" cy="107.100" r="11.200" fill="none" stroke="#f6f6f6" stroke-width="1.200"/>
<circle cx="271.500" cy="106.300" r="10.900" fill="url(#gBtn)" stroke="#888" stroke-width="1.200"/>
<path d="M264.200 104h4.900v-4.900h4.900v4.900h4.900v4.900h-4.900v4.900h-4.900v-4.900h-4.900z" fill="#606060"/>
</g>
<!-- zoom box -->
<rect x="291.500" y="93.500" width="72" height="27" fill="none" stroke="#fcfcfc" stroke-width="1"/>
<rect x="292.500" y="94.500" width="70" height="25" fill="#fff" stroke="#5a5a5a" stroke-width="1"/>
<rect x="341" y="95" width="21" height="24" fill="url(#gBtn)"/>
<path d="M340.500 95v24" stroke="#5a5a5a" stroke-width="1"/>
<path d="M347.800 105.200h7.400l-3.700 4z" fill="#4a4a4a"/>
<text x="302.300" y="110.700" font-size="12.200" fill="#000" textLength="28" lengthAdjust="spacingAndGlyphs">100%</text>
<!-- fit width -->
<g>
<path d="M390 97v5.200a0.800 0.800 0 0 0 0.800 0.800h12.300a0.800 0.800 0 0 0 0.800 -0.800v-5.200" fill="#f0f0f0" stroke="#111" stroke-width="1.300"/>
<path d="M390 116v-9.400a0.800 0.800 0 0 1 0.800 -0.800h9.500l3.600 3.600v6.600z" fill="#f2f2f2"/>
<path d="M390 116v-9.400a0.800 0.800 0 0 1 0.800 -0.800h9.500l3.600 3.600v6.600" fill="none" stroke="#111" stroke-width="1.300"/>
<path d="M400.200 106.600v3h3" fill="#fff" stroke="#a5a5a5" stroke-width="0.800"/>
<path d="M391.600 113.500h11" stroke="#6a7fc2" stroke-width="1.100"/>
<path d="M393.800 111.200l-2.600 2.300l2.600 2.300M400.400 111.200l2.600 2.300l-2.600 2.300" fill="none" stroke="#6a7fc2" stroke-width="1.300"/>
</g>
<!-- fit page -->
<g>
<path d="M423.800 98h10.200l3.850 3.850v12.150a0.800 0.800 0 0 1 -0.800 0.800h-13.250a0.800 0.800 0 0 1 -0.800 -0.800v-15.200a0.800 0.800 0 0 1 0.800 -0.800z" fill="#f3f3f3" stroke="#111" stroke-width="1.300"/>
<path d="M434 98.800v3.200h3.200" fill="#fff" stroke="#a5a5a5" stroke-width="0.800"/>
<path d="M428.700 99.400v6.200M428.700 109.400v5M424.400 107.600h2.800M430.600 107.600h6.400" stroke="#6a7fc2" stroke-width="1.100"/>
<path d="M426.400 101.400l2.300 -2.400l2.300 2.400M426.400 112.200l2.300 2.400l2.300 -2.400M426.400 105.400l-2.300 2.200l2.300 2.200M434.800 105.400l2.300 2.200l-2.300 2.200" fill="none" stroke="#6a7fc2" stroke-width="1.300"/>
</g>
<!-- customize -->
<text x="1052.300" y="74.600" font-size="12.500" fill="#333" textLength="59" lengthAdjust="spacingAndGlyphs">Customize</text>
<path d="M1122.600 68.300h7.600l-3.800 4.200z" fill="#4a4a4a"/>
<!-- fullscreen -->
<rect x="1172.500" y="58.500" width="23" height="23" fill="url(#gFs)" stroke="#8e8e8e" stroke-width="1"/>
<rect x="1173.500" y="59.500" width="21" height="21" fill="none" stroke="#fbfbfb" stroke-width="1" opacity="0.850"/>
<path d="M1192.800 61H1186L1187.740 62.740L1184.030 66.450L1187.350 69.770L1191.060 66.060L1192.800 67.800Z" fill="#666"/>
<path d="M1175.100 78.700H1181.900L1180.160 76.960L1183.870 73.250L1180.550 69.930L1176.840 73.640L1175.100 71.900Z" fill="#666"/>
<!-- pages -->
<g>
<rect x="11.500" y="140.500" width="14" height="16" rx="0.600" fill="url(#gPg)" stroke="#434343" stroke-width="1"/>
<path d="M16.500 136.500h10.500l3.500 3.500v12.500h-14z" fill="url(#gPg)" stroke="#434343" stroke-width="1"/>
<path d="M17.500 152v-14.500h9" fill="none" stroke="#dcdcdc" stroke-width="0.800" opacity="0.700"/>
<path d="M27 137v3h3" fill="#ececec" stroke="#8a8a8a" stroke-width="0.700"/>
</g>
<!-- bookmark -->
<g>
<path d="M22 179.300h4.600a1.600 1.600 0 0 1 1.600 1.600v7.700h-6.200z" fill="#758a9d" stroke="#56626c" stroke-width="0.800"/>
<path d="M12 181a1.700 1.700 0 0 1 1.700 -1.700h8.400v21.100l-5.050 -4.500l-5.050 4.500z" fill="url(#gBm)" stroke="#5a6873" stroke-width="0.900"/>
</g>
<!-- paperclip -->
<g transform="translate(20 232.300) rotate(-47)" fill="none" stroke-linecap="round">
<path d="M-5 4.200H7A4.200 4.200 0 0 0 7 -4.200H-8.400A3 3 0 0 0 -8.400 1.800H5.600A1.500 1.500 0 0 0 5.600 -1.200H-4" stroke="#7c7c7c" stroke-width="2.800" transform="translate(0.300 0.600)"/>
<path d="M-5 4.200H7A4.200 4.200 0 0 0 7 -4.200H-8.400A3 3 0 0 0 -8.400 1.800H5.600A1.500 1.500 0 0 0 5.600 -1.200H-4" stroke="#b0b0b0" stroke-width="1.700"/>
</g>
<!-- signature -->
<g>
<rect x="8.500" y="269" width="20" height="11" fill="#c8c8c8"/>
<path d="M10.600 277.800c1.800 -0.800 3.400 -3.200 4 -5.800c0.200 -1.100 -0.900 -1.100 -1.100 0c-0.500 2.400 -0.300 5.200 0.900 5.400c1 0.100 1.500 -1.500 2.400 -1.400c0.700 0.100 0.300 1.400 1.500 1.200l2.700 -0.800" fill="none" stroke="#2a2a2a" stroke-width="1.200"/>
<path d="M27.800 268.600l3 2.900l-11.800 12.200c-0.900 0.900 -2.300 1 -3.100 0.200c-0.800 -0.800 -0.700 -2.200 0.200 -3.100z" fill="#a0b5c8" stroke="#6c7c8c" stroke-width="0.700"/>
<path d="M27.800 268.600l3 2.900l-5 5.100l-3 -2.900z" fill="#dcdcdc" stroke="#8a8a8a" stroke-width="0.600"/>
<path d="M17.600 281.600l5.500 -5.600" stroke="#c4d6e6" stroke-width="1.100" stroke-linecap="round"/>
</g>
<!-- scrollbar arrows -->
<path d="M1194.300 145l3.400 -3.500l3.400 3.500" fill="none" stroke="#505050" stroke-width="1.900"/>
<path d="M1194.300 732.700l3.400 3.500l3.400 -3.500" fill="none" stroke="#505050" stroke-width="1.900"/>
</svg>
<!-- borders -->
<div class="abs" id="bl"></div><div class="abs" id="bl2"></div><div class="abs" id="bt"></div><div class="abs" id="br"></div><div class="abs" id="bb"></div>
</div>
</body></html>
